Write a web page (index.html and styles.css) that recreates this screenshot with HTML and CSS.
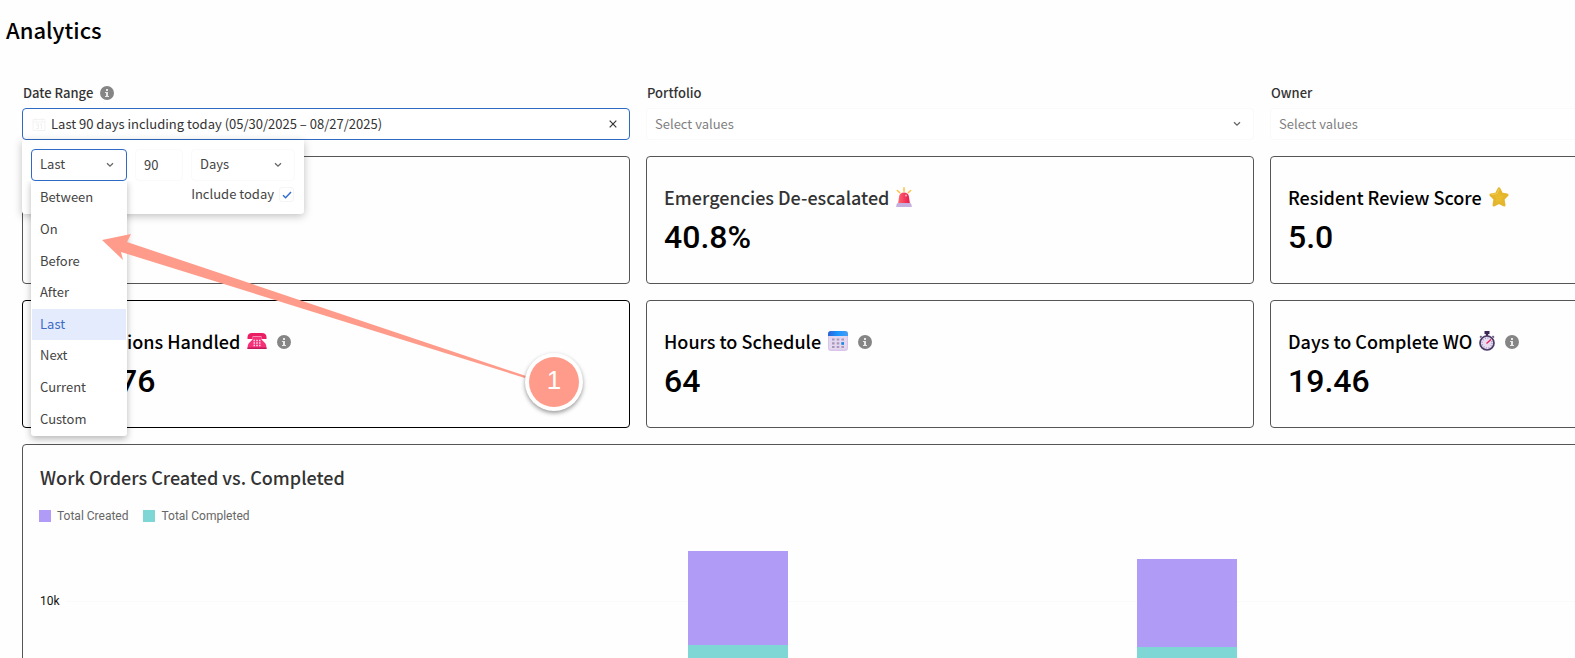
FILE: index.html
```html
<!DOCTYPE html>
<html lang="en">
<head>
<meta charset="utf-8">
<title>Analytics</title>
<link rel="stylesheet" href="styles.css">
</head>
<body>
<svg class="defs" aria-hidden="true">
  <symbol id="info" viewBox="0 0 14 14">
    <circle cx="7" cy="7" r="7" fill="#858585"/>
    <path d="M6 3h2v2H6zM5 6h3v4h1v1H5v-1h1V7H5z" fill="#e8e8e8"/>
  </symbol>
  <symbol id="chevron" viewBox="0 0 8 6">
    <path d="M1 1.2 4 4.2 7 1.2" fill="none" stroke="#666" stroke-width="1.3"/>
  </symbol>
</svg>
<main class="page">
  <h1 class="page-title">Analytics</h1>
  <div class="dashboard">
    <div class="filter">
      <div class="filter-head">
        <label class="filter-label" for="date-range">Date Range</label>
        <svg class="info"><use href="#info"/></svg>
      </div>
      <div class="field field-active">
        <svg class="calendar" viewBox="0 0 14 14" aria-hidden="true">
          <path d="M1 2.5h12v11H1zM1 5h12M4 1v3M10 1v3" fill="none" stroke="#f3f3f3"/>
          <path d="M4 7h2.500v4.500H4M4.500 9H6M8 7.500 9.500 7v5" fill="none" stroke="#f1f1f1"/>
        </svg>
        <input class="field-input" id="date-range" type="text" readonly value="Last 90 days including today (05/30/2025 – 08/27/2025)">
        <button class="clear" type="button" aria-label="Clear date range">
          <svg class="clear-icon" viewBox="0 0 8 8"><path d="M.7.7l6.600 6.600M7.300.7.7 7.300" stroke="#333" stroke-width="1.200"/></svg>
        </button>
        <div class="popover">
          <div class="popover-row">
            <div class="select-wrap mode">
              <select class="select select-open" aria-label="Range mode"><option>Last</option></select>
              <svg class="chevron"><use href="#chevron"/></svg>
              <ul class="menu" role="listbox" aria-label="Range mode options">
                <li class="menu-item" role="option">Between</li>
                <li class="menu-item" role="option">On</li>
                <li class="menu-item" role="option">Before</li>
                <li class="menu-item" role="option">After</li>
                <li class="menu-item menu-item-selected" role="option" aria-selected="true">Last</li>
                <li class="menu-item" role="option">Next</li>
                <li class="menu-item" role="option">Current</li>
                <li class="menu-item" role="option">Custom</li>
              </ul>
            </div>
            <input class="amount" type="text" value="90" aria-label="Amount">
            <div class="select-wrap unit">
              <select class="select" aria-label="Unit"><option>Days</option></select>
              <svg class="chevron"><use href="#chevron"/></svg>
            </div>
          </div>
          <label class="today">Include today
            <span class="check">
              <input class="check-input" type="checkbox" checked>
              <svg class="check-mark" viewBox="0 0 10 8"><path d="M1 4.300 3.600 6.800 9 1" fill="none" stroke="#2f6bd0" stroke-width="1.400"/></svg>
            </span>
          </label>
        </div>
      </div>
    </div>
    <div class="filter">
      <div class="filter-head"><label class="filter-label" for="portfolio">Portfolio</label></div>
      <div class="select-wrap">
        <select class="select placeholder" id="portfolio"><option>Select values</option></select>
        <svg class="chevron"><use href="#chevron"/></svg>
      </div>
    </div>
    <div class="filter">
      <div class="filter-head"><label class="filter-label" for="owner">Owner</label></div>
      <div class="select-wrap">
        <select class="select placeholder" id="owner"><option>Select values</option></select>
        <svg class="chevron"><use href="#chevron"/></svg>
      </div>
    </div>

    <section class="card"></section>
    <section class="card">
      <h2 class="card-title muted">Emergencies De-escalated
        <svg class="emoji" viewBox="2 0 16 20" aria-hidden="true">
          <defs><linearGradient id="red"><stop stop-color="#ff6670"/><stop offset="1" stop-color="#e8194d"/></linearGradient></defs>
          <path d="M10 .8v3.400M3.300 3.500l2.500 2.200M16.700 3.500l-2.500 2.200" stroke="#fbc343" stroke-width="1.500" stroke-linecap="round"/>
          <path d="M4 17 5.200 9Q6 5.500 10 5.500t4.800 3.500L16 17z" fill="url(#red)"/>
          <circle cx="12" cy="8.500" r="1" fill="#ffb5bb"/>
          <path d="M3.500 16h13q1.300 1 1.300 4H2.200q0-3 1.300-4z" fill="#c5b0e0"/>
        </svg>
      </h2>
      <p class="value">40.8%</p>
    </section>
    <section class="card">
      <h2 class="card-title">Resident Review Score
        <svg class="emoji wide" viewBox="0 0 20 20" aria-hidden="true">
          <path d="M10 1.800 12.500 7 18 7.900 14 12 15 18 10 15.500 5 18 6 12 2 7.900 7.500 7z" fill="#e9bd2f" stroke="#e6b52e" stroke-width="3" stroke-linejoin="round"/>
          <path d="M10 2.200 7.800 6.800 3 7.500" fill="none" stroke="#f3d257" stroke-linecap="round"/>
        </svg>
      </h2>
      <p class="value">5.0</p>
    </section>

    <section class="card card-strong">
      <h2 class="card-title">ions Handled
        <svg class="emoji wide" viewBox="0 0 20 20" aria-hidden="true">
          <path d="M.5 6Q.8 2 5 2h10q4.200 0 4.500 4v2h-5V5.500h-9V8h-5z" fill="#e91e63"/>
          <path d="M5.500 6h9v2.500L18 12q1.500 1.500 1.500 6H.5q0-4.500 1.500-6l3.500-3.500z" fill="#f5317a"/>
          <path d="M.5 16.500h19V18H.5z" fill="#c2185b"/>
          <path d="M6.500 9.500h7M6.500 12h7M6.500 14.500h7" stroke="#ffd9ea" stroke-width="1.500" stroke-dasharray="1.500 1.250"/>
        </svg>
        <svg class="info"><use href="#info"/></svg>
      </h2>
      <p class="value">76</p>
    </section>
    <section class="card">
      <h2 class="card-title">Hours to Schedule
        <svg class="emoji wide" viewBox="0 0 20 20" aria-hidden="true">
          <defs><linearGradient id="blue"><stop stop-color="#2d62d2"/><stop offset=".5" stop-color="#1b96ff"/><stop offset="1" stop-color="#4a9cf2"/></linearGradient></defs>
          <rect width="20" height="20" rx="3" fill="#d9c5ea"/>
          <rect x="1" y="4" width="18" height="14.500" rx="2" fill="#e4d7f0"/>
          <path d="M0 5V3q0-3 3-3h14q3 0 3 3v2z" fill="url(#blue)"/>
          <path d="M4 8.500h12M4 12.300h12M4 16h12" stroke="#a899b8" stroke-width="2.200" stroke-dasharray="2.600 2.100"/>
          <path d="M13.400 11.200H16v2.600h-2.600z" fill="#1b87f0"/>
        </svg>
        <svg class="info"><use href="#info"/></svg>
      </h2>
      <p class="value">64</p>
    </section>
    <section class="card">
      <h2 class="card-title">Days to Complete WO
        <svg class="emoji" viewBox="2 0 16 20" aria-hidden="true">
          <path d="M7.500 0h5v3h-1.300v2H8.800V3H7.500z" fill="#3c2659"/>
          <path d="M3 6.500 4.500 5M17 6.500 15.500 5" stroke="#5d5275" stroke-width="1.500"/>
          <circle cx="10" cy="12" r="7" fill="#e7dcf1" stroke="#4a3a68" stroke-width="1.700"/>
          <circle cx="10" cy="12" r="5" fill="none" stroke="#8d7fa0" stroke-width="1.200" stroke-dasharray=".8 1.818"/>
          <path d="M9.500 12.500 14 8.500" stroke="#e9235f" stroke-width="1.300"/>
        </svg>
        <svg class="info"><use href="#info"/></svg>
      </h2>
      <p class="value">19.46</p>
    </section>

    <section class="card chart">
      <h2 class="card-title muted">Work Orders Created vs. Completed</h2>
      <div class="legend">
        <span class="legend-item"><i class="swatch created"></i>Total Created</span>
        <span class="legend-item"><i class="swatch completed"></i>Total Completed</span>
      </div>
      <div class="plot">
        <div class="tick"><span>10k</span><i class="gridline"></i></div>
        <div class="bar created"></div>
        <div class="bar created" style="height:281px"><div class="completed" style="height:187px"></div></div>
        <div class="bar created" style="height:273px"><div class="completed" style="height:185px"></div></div>
        <div class="bar created"></div>
      </div>
    </section>
  </div>
  <svg class="annotation" viewBox="0 0 490 190" aria-label="Step 1">
    <path d="M2 10 31 4 27 12 426 146 425 148 21 22 23 30z" fill="#ff9b8a"/>
    <circle class="badge" cx="454" cy="152" r="29" fill="#fff"/>
    <circle cx="454" cy="152" r="25" fill="#ff9b8a"/>
    <text class="badge-text" x="454" y="159" text-anchor="middle">1</text>
  </svg>
</main>
</body>
</html>
```
FILE: styles.css
```css
* { box-sizing: border-box; }

body {
  margin: 0;
  background: #fefefe;
  color: #333;
  font: 13px/20px "Noto Sans CJK SC", "Open Sans", sans-serif;
}

input, select, button { font: inherit; color: inherit; margin: 0; }

.defs { position: absolute; width: 0; height: 0; }

.page {
  position: relative;
  height: 100vh;
  overflow: hidden;
}

.page-title {
  margin: 0;
  padding: 13px 6px 17px;
  font-size: 22px;
  line-height: 32px;
  font-weight: 500;
  color: #000;
}

.dashboard {
  display: grid;
  grid-template-columns: repeat(3, minmax(608px, 1fr));
  gap: 16px;
  padding: 21px 22px;
}

.filter-head {
  display: flex;
  align-items: center;
  gap: 7px;
  height: 20px;
  margin-bottom: 5px;
  padding-left: 1px;
}

.filter-label { font-weight: 500; }

.info { width: 14px; height: 14px; flex: none; }

.field {
  position: relative;
  display: flex;
  align-items: center;
  height: 32px;
  padding: 0 12px 0 9px;
  border: 1px solid #2f6bc4;
  border-radius: 4px;
  background: #fff;
}

.calendar { width: 14px; height: 14px; }

.field-input {
  flex: 1;
  border: 0;
  padding: 0 5px;
  background: none;
  outline: 0;
}

.clear {
  display: flex;
  border: 0;
  padding: 0;
  background: none;
}

.clear-icon { width: 8px; height: 8px; }

.select-wrap { position: relative; }

.select {
  appearance: none;
  display: block;
  width: 100%;
  height: 32px;
  padding: 0 8px;
  border: 1px solid #fafafa;
  border-radius: 4px;
  background: #fff;
}

.select-open { border-color: #2f6bc4; }
.placeholder { color: #7f7f7f; }

.chevron {
  position: absolute;
  right: 13px;
  top: 13px;
  width: 8px;
  height: 6px;
  pointer-events: none;
}

.popover {
  position: absolute;
  z-index: 2;
  top: 31px;
  left: -1px;
  width: 282px;
  padding: 9px;
  background: #fff;
  border-radius: 0 0 3px 3px;
  box-shadow: 0 2px 8px rgba(0, 0, 0, .25);
  color: #444;
}

.popover-row { display: flex; gap: 8px; }
.popover-row .select, .amount { padding-bottom: 2px; }
.mode { width: 96px; }
.unit { flex: 1; }

.amount {
  width: 48px;
  height: 32px;
  padding: 0 8px 2px;
  border: 1px solid #fafafa;
  border-radius: 4px;
}

.menu {
  position: absolute;
  top: 31px;
  left: 0;
  display: flex;
  flex-direction: column;
  width: 100%;
  height: 256px;
  margin: 0;
  padding: 2px 1px 1px;
  list-style: none;
  background: #fff;
  border-radius: 0 0 3px 3px;
  box-shadow: 0 3px 7px rgba(0, 0, 0, .28);
  clip-path: inset(1px -10px -12px -10px);
}

.menu-item {
  display: flex;
  flex: 1;
  align-items: center;
  padding: 0 8px 1px;
}

.menu-item-selected { background: #e3ebfd; color: #3c6bc4; }

.today {
  display: flex;
  justify-content: flex-end;
  align-items: center;
  gap: 5px;
  margin: 3px 1px 1px 0;
}

.check { position: relative; display: flex; }

.check-input {
  appearance: none;
  width: 15px;
  height: 15px;
  border: 1px solid #f5f5f5;
  border-radius: 3px;
}

.check-mark {
  position: absolute;
  left: 3px;
  top: 4px;
  width: 10px;
  height: 8px;
}

.card {
  min-height: 128px;
  padding: 26px 17px 14px;
  border: 1px solid #555;
  border-radius: 4px;
}

.card-strong { border-color: #000; padding-left: 96px; }
.card-strong .card-title { padding-left: 8px; }

.card-title {
  display: flex;
  align-items: center;
  gap: 7px;
  margin: 0;
  font-size: 18px;
  line-height: 28px;
  font-weight: 500;
  color: #000;
}

.muted { color: #333; }

.emoji { width: 16px; height: 20px; flex: none; }
.wide { width: 20px; }
.emoji + .info { margin: 2px 0 0 3px; }

.value {
  margin: 2px 0 0;
  font: 500 32px/48px Roboto, sans-serif;
  color: #000;
}

.chart {
  grid-column: 1 / -1;
  padding: 18px 17px 20px;
}

.legend {
  display: flex;
  gap: 15px;
  margin: 15px -1px 0;
  font: 12px/20px Roboto, sans-serif;
  color: #666;
}

.legend-item { display: flex; align-items: center; gap: 6px; }
.swatch { width: 12px; height: 12px; }
.created { background: #b09cf7; }
.completed { background: #7ed6d5; }

.plot {
  position: relative;
  display: grid;
  grid-template-columns: repeat(4, 1fr);
  align-items: end;
  justify-items: center;
  height: 300px;
  margin-top: 6px;
  padding-left: 24px;
}

.tick {
  position: absolute;
  top: 59px;
  left: 0;
  right: 0;
  display: flex;
  align-items: center;
  gap: 6px;
  font: 12px/20px Roboto, sans-serif;
  color: #111;
}

.gridline { flex: 1; height: 1px; background: #fafafa; }

.bar {
  position: relative;
  display: flex;
  align-items: flex-end;
  width: 100px;
  height: 80px;
}

.bar > .completed { width: 100%; }

.annotation {
  position: absolute;
  z-index: 3;
  left: 100px;
  top: 230px;
  width: 490px;
  height: 190px;
  pointer-events: none;
}

.badge { filter: drop-shadow(0 2px 2px rgba(0, 0, 0, .4)); }
.badge-text { font: 26px "Liberation Sans", sans-serif; fill: #fff; }
```
